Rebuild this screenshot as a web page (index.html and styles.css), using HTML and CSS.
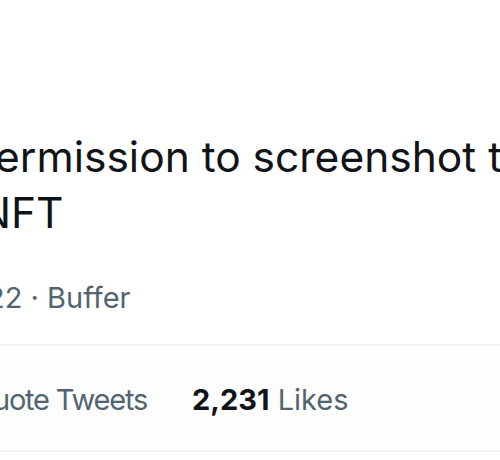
FILE: index.html
```html
<!DOCTYPE html>
<html>
<head>
<meta charset="utf-8">
<link rel="stylesheet" href="styles.css">
</head>
<body>
<main class="tweet">
  <p class="tweet-text"><span class="line">permission to screenshot this</span><span class="line line-last">NFT</span></p>
  <div class="meta">2022 · Buffer</div>
  <div class="stats">
    <span class="stat stat-label">Quote Tweets</span>
    <span class="stat"><strong class="num">2,231</strong> Likes</span>
  </div>
</main>
</body>
</html>
```
FILE: styles.css
```css
html, body {
  margin: 0;
  padding: 0;
  background: #ffffff;
  overflow: hidden;
}
body {
  width: 500px;
  height: 460px;
  font-family: "Inter", "Liberation Sans", sans-serif;
  color: #0f1419;
}
.tweet {
  padding-top: 129px;
}
.tweet-text {
  margin: 0 0 0 -31px;
  font-size: 42.5px;
  line-height: 56px;
  white-space: nowrap;
}
.line {
  display: block;
}
.line-last {
  padding-left: 10px;
}
.meta {
  margin-top: 37px;
  margin-left: -49px;
  font-size: 29px;
  line-height: 40px;
  color: #536471;
  white-space: nowrap;
}
.stats {
  margin-top: 26px;
  border-top: 2px solid #eff3f4;
  border-bottom: 2px solid #eff3f4;
  background: #fdfdfe;
  height: 104px;
  display: flex;
  align-items: center;
  gap: 45px;
  margin-left: -28px;
  font-size: 29px;
  color: #536471;
  white-space: nowrap;
}
.stat {
  padding-top: 2px;
}
.stat-label {
  letter-spacing: -1.2px;
}
.num {
  color: #0f1419;
  font-weight: 700;
}
```
